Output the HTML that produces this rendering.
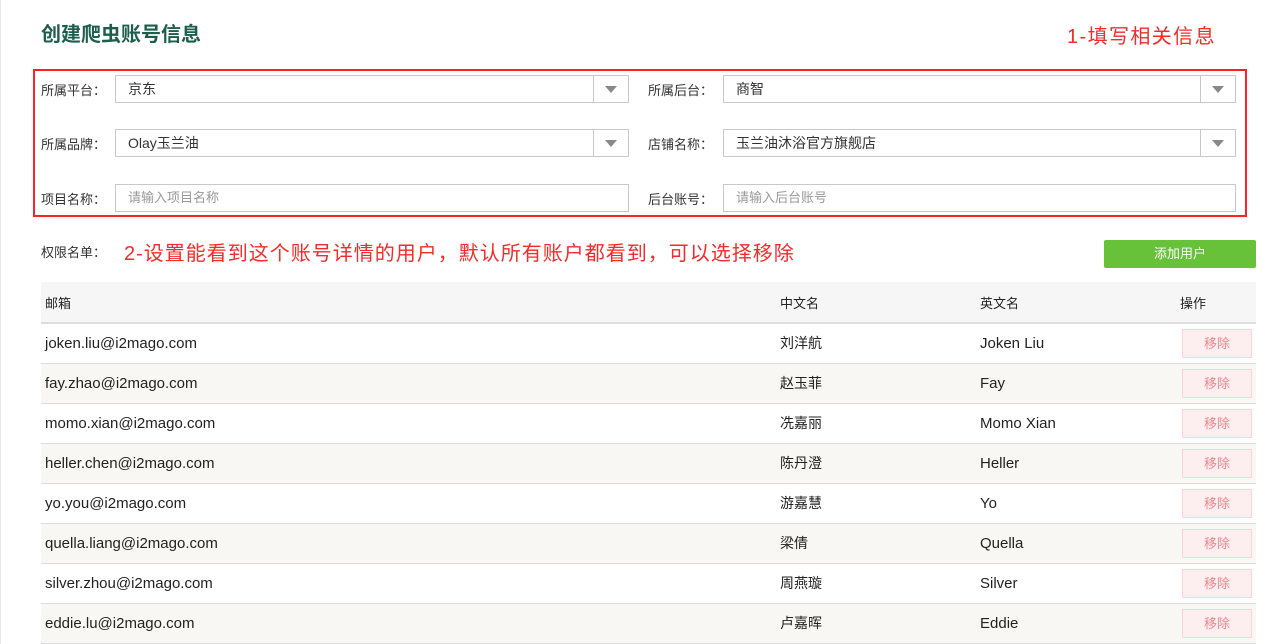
<!DOCTYPE html>
<html><head><meta charset="utf-8"><style>
*{margin:0;padding:0;box-sizing:border-box}
body{width:1277px;height:644px;overflow:hidden;background:#fff;font-family:"Liberation Sans","Noto Sans CJK SC",sans-serif;color:#333;position:relative}
.a{position:absolute}
.t{left:41px;top:18px;font-size:20px;font-weight:bold;color:#1d5f4c}
.r{color:#f52a2a;font-size:20px}
.box{left:33px;top:69px;width:1214px;height:148px;border:2px solid #f22}
.lb{font-size:13px;color:#333}
.in{height:28px;border:1px solid #c8c8c8;font-size:14px;line-height:26px;padding-left:12px;background:#fff}
.in.ph{color:#999;font-size:13px}
.dd{position:absolute;right:0;top:0;width:35px;height:26px;border-left:1px solid #c8c8c8}
.dd:after{content:"";position:absolute;left:11px;top:10px;border-left:6px solid transparent;border-right:6px solid transparent;border-top:7px solid #888}
.btn{left:1104px;top:240px;width:152px;height:28px;background:#67c23a;color:#fff;font-size:13px;text-align:center;line-height:28px;border-radius:2px}
table{position:absolute;left:41px;top:282px;width:1215px;border-collapse:collapse;font-size:15px}
td{height:40px;border-bottom:1px solid #ddd;padding:0;color:#222}
tr.h td{background:#f6f6f6;font-size:13px;height:41px;border-bottom:2px solid #ddd}
tr:nth-child(odd):not(.h) td{background:#f8f7f3}
.c1{padding-left:4px;width:735px}.c2{width:200px}.c3{width:200px}
td.z{font-size:14px}
.rm{display:inline-block;width:70px;height:29px;background:#fdeef0;border:1px solid #fbd5da;color:#f5848f;font-size:13px;text-align:center;line-height:27px;margin-left:6px}
</style></head><body>
<div class="a" style="left:0;top:0;width:1px;height:644px;background:#e5e5e5"></div>
<div class="a t">创建爬虫账号信息</div>
<div class="a r" style="left:1067px;top:20px;letter-spacing:1.4px">1-填写相关信息</div>
<div class="a box"></div>
<div class="a lb" style="left:41px;top:80px">所属平台：</div>
<div class="a in" style="left:115px;top:75px;width:514px">京东<div class="dd"></div></div>
<div class="a lb" style="left:648px;top:80px">所属后台：</div>
<div class="a in" style="left:723px;top:75px;width:513px">商智<div class="dd"></div></div>
<div class="a lb" style="left:41px;top:134px">所属品牌：</div>
<div class="a in" style="left:115px;top:129px;width:514px">Olay玉兰油<div class="dd"></div></div>
<div class="a lb" style="left:648px;top:134px">店铺名称：</div>
<div class="a in" style="left:723px;top:129px;width:513px">玉兰油沐浴官方旗舰店<div class="dd"></div></div>
<div class="a lb" style="left:41px;top:189px">项目名称：</div>
<div class="a in ph" style="left:115px;top:184px;width:514px">请输入项目名称</div>
<div class="a lb" style="left:648px;top:189px">后台账号：</div>
<div class="a in ph" style="left:723px;top:184px;width:513px">请输入后台账号</div>
<div class="a lb" style="left:41px;top:242px">权限名单：</div>
<div class="a r" style="left:124px;top:237px;letter-spacing:1px">2-设置能看到这个账号详情的用户，默认所有账户都看到，可以选择移除</div>
<div class="a btn">添加用户</div>
<table>
<tr class="h"><td class="c1">邮箱</td><td class="c2" style="padding-left:4px">中文名</td><td class="c3" style="padding-left:4px">英文名</td><td style="padding-left:4px">操作</td></tr>
<tr><td class="c1">joken.liu@i2mago.com</td><td class="z" style="padding-left:4px">刘洋航</td><td style="padding-left:4px">Joken Liu</td><td><span class="rm">移除</span></td></tr>
<tr><td class="c1">fay.zhao@i2mago.com</td><td class="z" style="padding-left:4px">赵玉菲</td><td style="padding-left:4px">Fay</td><td><span class="rm">移除</span></td></tr>
<tr><td class="c1">momo.xian@i2mago.com</td><td class="z" style="padding-left:4px">冼嘉丽</td><td style="padding-left:4px">Momo Xian</td><td><span class="rm">移除</span></td></tr>
<tr><td class="c1">heller.chen@i2mago.com</td><td class="z" style="padding-left:4px">陈丹澄</td><td style="padding-left:4px">Heller</td><td><span class="rm">移除</span></td></tr>
<tr><td class="c1">yo.you@i2mago.com</td><td class="z" style="padding-left:4px">游嘉慧</td><td style="padding-left:4px">Yo</td><td><span class="rm">移除</span></td></tr>
<tr><td class="c1">quella.liang@i2mago.com</td><td class="z" style="padding-left:4px">梁倩</td><td style="padding-left:4px">Quella</td><td><span class="rm">移除</span></td></tr>
<tr><td class="c1">silver.zhou@i2mago.com</td><td class="z" style="padding-left:4px">周燕璇</td><td style="padding-left:4px">Silver</td><td><span class="rm">移除</span></td></tr>
<tr><td class="c1">eddie.lu@i2mago.com</td><td class="z" style="padding-left:4px">卢嘉晖</td><td style="padding-left:4px">Eddie</td><td><span class="rm">移除</span></td></tr>
</table>
</body></html>
